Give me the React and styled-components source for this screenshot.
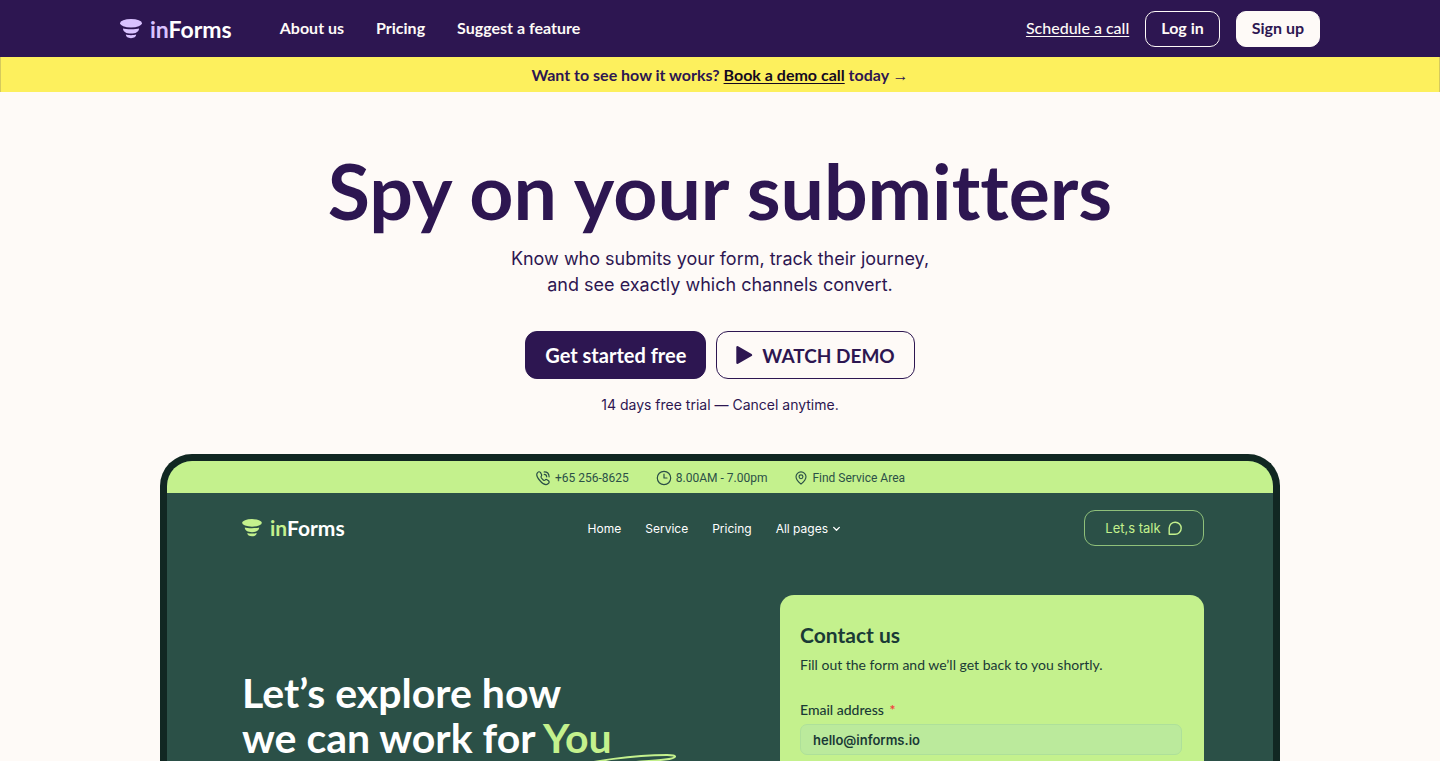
import React from "react";
import styled, { createGlobalStyle } from "styled-components";

const plum = "#2d1651";
const cream = "#fefaf7";
const lime = "#c4f18d";
const pine = "#2b5047";
const ink = "#1a3a36";
const display = `Lato, "Open Sans", "Liberation Sans", sans-serif`;
const body = `Inter, "Liberation Sans", sans-serif`;
const compact = `Roboto, "Liberation Sans", sans-serif`;

const GlobalStyle = createGlobalStyle`
  *, *::before, *::after { box-sizing: border-box; }
  body {
    margin: 0;
    background: ${cream};
    color: ${plum};
    font-family: ${display};
    font-variant-ligatures: none;
  }
  h1, h2, p, ul { margin: 0; padding: 0; }
  ul { list-style: none; }
  a { color: inherit; text-decoration: none; }
  button, input { font: inherit; color: inherit; }
  svg { display: block; flex: none; }
`;

const Page = styled.div`
  height: 100vh;
  overflow: hidden;
  display: flex;
  flex-direction: column;
`;

const NavBar = styled.header`
  flex: none;
  background: ${plum};
  color: ${cream};
  padding: 0 24px;
`;

const NavInner = styled.div`
  max-width: 1200px;
  height: 57px;
  margin: 0 auto;
  display: flex;
  align-items: center;
  justify-content: space-between;
`;

const Cluster = styled.div`
  display: flex;
  align-items: center;
  gap: ${(p) => p.$gap}px;
`;

const NavLinks = styled.ul`
  display: flex;
  gap: 32px;
  padding-bottom: 2px;
  font-size: 16px;
  font-weight: 700;
`;

const LogoLink = styled.a`
  display: flex;
  align-items: center;
  gap: 8px;
  font-weight: 700;
  font-size: ${(p) => p.$size}px;
  line-height: 24px;
  color: #fff;
`;

const LogoAccent = styled.span`
  color: ${(p) => p.$color};
`;

const TextLink = styled.a`
  padding-bottom: 2px;
  font-size: 16px;
  font-weight: ${(p) => (p.$bold ? 700 : 500)};
  text-decoration: underline;
  text-underline-offset: 2px;
`;

const NavButton = styled.button`
  height: 36px;
  padding: 0 15px 2px;
  border-radius: 10px;
  border: 1px solid ${cream};
  background: ${(p) => (p.$solid ? cream : "transparent")};
  color: ${(p) => (p.$solid ? plum : cream)};
  font-size: 16px;
  font-weight: 700;
`;

const Banner = styled.p`
  flex: none;
  height: 35px;
  border: solid #d5ca5c;
  border-width: 0 1px;
  background: #fdf05d;
  text-align: center;
  font-size: 16px;
  line-height: 35px;
  font-weight: 700;
`;

const Arrow = styled.span`
  font-family: "Liberation Sans", sans-serif;
`;

const DarkLink = styled(TextLink)`
  color: #14081f;
`;

const Hero = styled.section`
  flex: none;
  padding: 54px 24px 39px;
  display: flex;
  flex-direction: column;
  align-items: center;
  text-align: center;
`;

const Headline = styled.h1`
  font-size: 77px;
  line-height: 88px;
  font-weight: 700;
`;

const Subtitle = styled.p`
  margin-top: 12px;
  font-family: ${body};
  font-size: 18px;
  line-height: 26px;
`;

const Actions = styled.div`
  margin-top: 33px;
  display: flex;
  gap: 10px;
`;

const ActionButton = styled.button`
  height: 48px;
  padding: 0 19px;
  display: flex;
  align-items: center;
  gap: 9px;
  border: 1px solid ${plum};
  border-radius: 12px;
  background: ${(p) => (p.$solid ? plum : "transparent")};
  color: ${(p) => (p.$solid ? "#fff" : plum)};
  font-size: ${(p) => (p.$solid ? 20 : 19)}px;
  font-weight: 700;
`;

const Fine = styled.p`
  margin-top: 16px;
  font-family: ${body};
  font-size: 14px;
  line-height: 20px;
`;

const Device = styled.section`
  flex: 1 0 0;
  min-height: 0;
  width: calc(100% - 48px);
  max-width: 1120px;
  margin: 0 auto;
  border: solid #112722;
  border-width: 7px 7px 0;
  border-radius: 32px 32px 0 0;
  overflow: hidden;
  background: ${pine};
  color: #fff;
`;

const TopStrip = styled.div`
  height: 32px;
  padding-top: 2px;
  background: ${lime};
  color: ${pine};
  display: flex;
  align-items: center;
  justify-content: center;
  gap: 27px;
  font-family: ${compact};
  font-size: 12px;
`;

const SiteNav = styled.div`
  height: 70px;
  padding: 0 69px 0 75px;
  display: flex;
  justify-content: space-between;
  align-items: center;
`;

const SiteLinks = styled.ul`
  display: flex;
  gap: 24px;
  font-family: ${body};
  font-size: 12px;
`;

const MenuLink = styled.a`
  display: flex;
  align-items: center;
  gap: 4px;
`;

const TalkButton = styled.button`
  width: 120px;
  height: 36px;
  padding: 0;
  display: flex;
  align-items: center;
  justify-content: center;
  gap: 6px;
  border: 1px solid #8fc07a;
  border-radius: 11px;
  background: transparent;
  color: ${lime};
  font-family: ${body};
  font-size: 13px;
`;

const Showcase = styled.div`
  padding: 32px 69px 0 75px;
  display: grid;
  grid-template-columns: 1fr 424px;
`;

const Pitch = styled.h2`
  padding-top: 75px;
  font-size: 41px;
  line-height: 45px;
  font-weight: 700;
`;

const Highlight = styled.span`
  position: relative;
  color: ${lime};
`;

const Swirl = styled.svg`
  position: absolute;
  left: 24px;
  top: 40px;
`;

const Card = styled.form`
  height: 400px;
  padding: 26px 22px 0 20px;
  border-radius: 14px;
  background: ${lime};
  color: ${ink};
`;

const CardTitle = styled.h2`
  font-size: 21px;
  line-height: 28px;
  font-weight: 700;
`;

const CardText = styled.p`
  margin-top: 6px;
  font-size: 14px;
  line-height: 20px;
`;

const FieldLabel = styled.label`
  display: block;
  margin-top: 25px;
  font-size: 14px;
  line-height: 20px;
  font-weight: 500;
`;

const Required = styled.span`
  margin-left: 2px;
  color: #f0443e;
  font-weight: 700;
`;

const Field = styled.input`
  display: block;
  width: 100%;
  height: 31px;
  margin-top: 4px;
  padding: 0 12px;
  border: 1px solid #aee09a;
  border-radius: 7px;
  background: #bbea9c;
  font-family: ${body};
  font-size: 13px;
  font-weight: 600;
`;

const FunnelMark = ({ width, color }) => (
  <svg width={width} height={Math.round((width * 20) / 22)} viewBox="0 0 22 20" fill={color} aria-hidden="true">
    <ellipse cx="11" cy="4.3" rx="11" ry="4.2" />
    <path d="M3 9.4C5.6 10.5 16.4 10.5 19 9.4C19 12.6 15.6 14.6 11 14.6S3 12.6 3 9.4Z" />
    <path d="M5.8 15.6C8 16.4 14 16.4 16.2 15.6C16.2 17.9 14 19.2 11 19.2S5.8 17.9 5.8 15.6Z" />
  </svg>
);

const Logo = ({ accent, size, mark }) => (
  <LogoLink href="#" $size={size}>
    <FunnelMark width={mark} color={accent} />
    <span>
      <LogoAccent $color={accent}>in</LogoAccent>Forms
    </span>
  </LogoLink>
);

const Stroke = ({ size = 16, width = 1.2, children }) => (
  <svg
    width={size}
    height={size}
    viewBox="0 0 16 16"
    fill="none"
    stroke="currentColor"
    strokeWidth={width}
    strokeLinecap="round"
    strokeLinejoin="round"
    aria-hidden="true"
  >
    {children}
  </svg>
);

export default function App() {
  return (
    <Page>
      <GlobalStyle />
      <NavBar>
        <NavInner>
          <Cluster $gap={48}>
            <Logo accent="#d9c2ff" size={23} mark={22} />
            <NavLinks>
              <li><a href="#">About us</a></li>
              <li><a href="#">Pricing</a></li>
              <li><a href="#">Suggest a feature</a></li>
            </NavLinks>
          </Cluster>
          <Cluster $gap={16}>
            <TextLink href="#">Schedule a call</TextLink>
            <NavButton type="button">Log in</NavButton>
            <NavButton type="button" $solid>Sign up</NavButton>
          </Cluster>
        </NavInner>
      </NavBar>
      <Banner>
        Want to see how it works? <DarkLink href="#" $bold>Book a demo call</DarkLink> today <Arrow>→</Arrow>
      </Banner>
      <Hero>
        <Headline>Spy on your submitters</Headline>
        <Subtitle>
          Know who submits your form, track their journey,
          <br />
          and see exactly which channels convert.
        </Subtitle>
        <Actions>
          <ActionButton type="button" $solid>Get started free</ActionButton>
          <ActionButton type="button">
            <svg width="17" height="20" viewBox="0 0 17 20" aria-hidden="true">
              <path
                d="M1.500 2.200V17.800L15 10Z"
                fill={plum}
                stroke={plum}
                strokeWidth="2.400"
                strokeLinejoin="round"
              />
            </svg>
            WATCH DEMO
          </ActionButton>
        </Actions>
        <Fine>14 days free trial — Cancel anytime.</Fine>
      </Hero>
      <Device>
        <TopStrip>
          <Cluster $gap={4}>
            <Stroke>
              <path d="M5.4 2.4C4.3 1.3 3.3 1.7 2.4 2.8C1.2 4.3 1.9 7.2 4.8 10.5C7.8 13.9 11.2 15.3 13 13.8C14.2 12.8 14.6 11.8 13.5 10.8L12 9.7C11.2 9.2 10.6 9.5 10 10.2C9.4 10.8 8.6 10.5 7.4 9.2C6.1 7.8 5.6 7 6.2 6.3C6.8 5.7 6.9 5.1 6.4 4.2Z" />
              <path d="M9.2 4.3C10.6 4.4 11.6 5.4 11.7 6.8M9.2 1.900C12 1.900 14 4 14.1 6.8" />
            </Stroke>
            +65 256-8625
          </Cluster>
          <Cluster $gap={4}>
            <Stroke>
              <circle cx="8" cy="8" r="6.7" />
              <path d="M8 4.2V8H11" />
            </Stroke>
            8.00AM - 7.00pm
          </Cluster>
          <Cluster $gap={4}>
            <Stroke size={14} width={1.3}>
              <path d="M8 15C5.8 13.2 2.3 10.2 2.3 6.7A5.7 5.7 0 0 1 13.7 6.7C13.7 10.2 10.2 13.2 8 15Z" />
              <circle cx="8" cy="6.7" r="2.2" />
            </Stroke>
            Find Service Area
          </Cluster>
        </TopStrip>
        <SiteNav>
          <Logo accent={lime} size={21} mark={20} />
          <SiteLinks>
            <li><a href="#">Home</a></li>
            <li><a href="#">Service</a></li>
            <li><a href="#">Pricing</a></li>
            <li>
              <MenuLink href="#">
                All pages
                <Stroke size={9} width={2.4}><path d="M3 6L8 11L13 6" /></Stroke>
              </MenuLink>
            </li>
          </SiteLinks>
          <TalkButton type="button">
            Let,s talk
            <Stroke width={1.4}>
              <path d="M2.2 14.2L2.2 8A6 6 0 1 1 8.2 14.2Z" />
            </Stroke>
          </TalkButton>
        </SiteNav>
        <Showcase>
          <Pitch>
            Let’s explore how
            <br />
            we can work for{" "}
            <Highlight>
              You
              <Swirl width="112" height="30" viewBox="0 0 112 30" fill="none" stroke={lime} strokeWidth="2" aria-hidden="true">
                <path d="M2 15C24 8 66 2 100 2C111 2 111 5 98 6.500C74 9.500 42 9 20 17" />
              </Swirl>
            </Highlight>
          </Pitch>
          <Card>
            <CardTitle>Contact us</CardTitle>
            <CardText>Fill out the form and we’ll get back to you shortly.</CardText>
            <FieldLabel htmlFor="email">
              Email address <Required>*</Required>
            </FieldLabel>
            <Field id="email" type="email" defaultValue="hello@informs.io" />
          </Card>
        </Showcase>
      </Device>
    </Page>
  );
}
